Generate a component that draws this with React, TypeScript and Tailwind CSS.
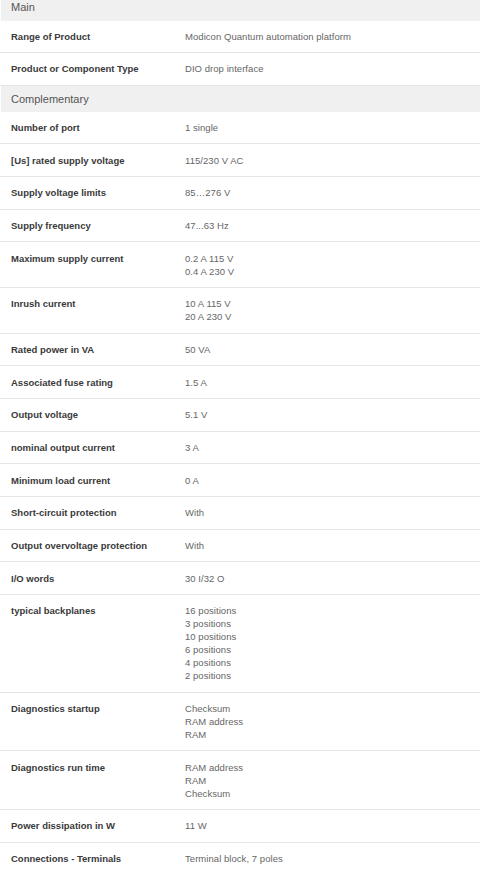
import React from 'react';

type Row = { label: string; values: string[] };
type Section = { title: string; rows: Row[] };

const sections: Section[] = [
    {
        title: 'Main',
        rows: [
            { label: 'Range of Product', values: ['Modicon Quantum automation platform'] },
            { label: 'Product or Component Type', values: ['DIO drop interface'] },
        ],
    },
    {
        title: 'Complementary',
        rows: [
            { label: 'Number of port', values: ['1 single'] },
            { label: '[Us] rated supply voltage', values: ['115/230 V AC'] },
            { label: 'Supply voltage limits', values: ['85…276 V'] },
            { label: 'Supply frequency', values: ['47...63 Hz'] },
            { label: 'Maximum supply current', values: ['0.2 A 115 V', '0.4 A 230 V'] },
            { label: 'Inrush current', values: ['10 A 115 V', '20 A 230 V'] },
            { label: 'Rated power in VA', values: ['50 VA'] },
            { label: 'Associated fuse rating', values: ['1.5 A'] },
            { label: 'Output voltage', values: ['5.1 V'] },
            { label: 'nominal output current', values: ['3 A'] },
            { label: 'Minimum load current', values: ['0 A'] },
            { label: 'Short-circuit protection', values: ['With'] },
            { label: 'Output overvoltage protection', values: ['With'] },
            { label: 'I/O words', values: ['30 I/32 O'] },
            {
                label: 'typical backplanes',
                values: ['16 positions', '3 positions', '10 positions', '6 positions', '4 positions', '2 positions'],
            },
            { label: 'Diagnostics startup', values: ['Checksum', 'RAM address', 'RAM'] },
            { label: 'Diagnostics run time', values: ['RAM address', 'RAM', 'Checksum'] },
            { label: 'Power dissipation in W', values: ['11 W'] },
            { label: 'Connections - Terminals', values: ['Terminal block, 7 poles'] },
        ],
    },
];

function SpecRow({ row, last }: { row: Row; last: boolean }) {
    return (
        <div className={`flex px-[11px] py-[9.33px] ${last ? '' : 'border-b border-[#e5e5e5]'}`}>
            <div className="w-[174px] shrink-0 text-[9.5px] leading-[13px] font-bold text-[#3a3a3a]">
                {row.label}
            </div>
            <div className="flex flex-col text-[9.5px] leading-[13px] text-[#666] tracking-[0.05px]">
                {row.values.map((v, i) => (
                    <span key={i}>{v}</span>
                ))}
            </div>
        </div>
    );
}

export default function App() {
    return (
        <div className="w-[480px] h-[871px] overflow-hidden bg-white">
            <div className="-mt-[5.5px] font-['Liberation_Sans',Arial,sans-serif]">
                {sections.map((s, si) => (
                    <div key={s.title}>
                        <div className="ml-px h-[26px] flex items-center px-[10px] bg-[#f0f0f0] text-[11px] text-[#555]">
                            {s.title}
                        </div>
                        {s.rows.map((r, ri) => (
                            <SpecRow key={r.label} row={r} last={si === sections.length - 1 && ri === s.rows.length - 1} />
                        ))}
                    </div>
                ))}
            </div>
        </div>
    );
}
